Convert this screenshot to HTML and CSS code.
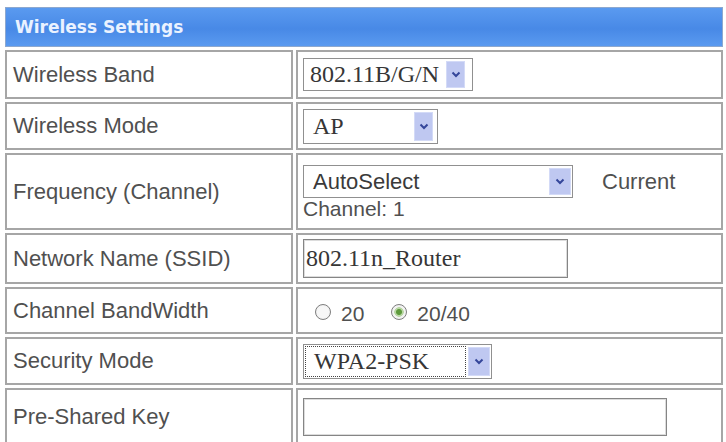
FILE: index.html
```html
<!DOCTYPE html>
<html lang="en">
<head>
<meta charset="utf-8">
<title>Wireless Settings</title>
<link rel="stylesheet" href="styles.css">
</head>
<body>
<div class="panel">
  <div class="head">Wireless Settings</div>

  <div class="label">Wireless Band</div>
  <div class="value">
    <div class="select select-band">
      <span class="select-text serif">802.11B/G/N</span>
      <span class="select-btn"><svg width="10" height="7" viewBox="0 0 10 7"><path d="M1.5 1.5 L5 5 L8.5 1.5" fill="none" stroke="#34469a" stroke-width="2"/></svg></span>
    </div>
  </div>

  <div class="label">Wireless Mode</div>
  <div class="value">
    <div class="select select-mode">
      <span class="select-text serif">AP</span>
      <span class="select-btn"><svg width="10" height="7" viewBox="0 0 10 7"><path d="M1.5 1.5 L5 5 L8.5 1.5" fill="none" stroke="#34469a" stroke-width="2"/></svg></span>
    </div>
  </div>

  <div class="label">Frequency (Channel)</div>
  <div class="value value-stack">
    <div class="freq-line">
      <div class="select select-freq">
        <span class="select-text sans">AutoSelect</span>
        <span class="select-btn"><svg width="10" height="7" viewBox="0 0 10 7"><path d="M1.5 1.5 L5 5 L8.5 1.5" fill="none" stroke="#34469a" stroke-width="2"/></svg></span>
      </div>
      <span class="current">Current</span>
    </div>
    <div class="channel">Channel: 1</div>
  </div>

  <div class="label">Network Name (SSID)</div>
  <div class="value">
    <input class="field field-ssid serif" type="text" value="802.11n_Router">
  </div>

  <div class="label">Channel BandWidth</div>
  <div class="value value-radio">
    <label class="radio"><input type="radio" name="bw"><span>20</span></label>
    <label class="radio"><input type="radio" name="bw" checked><span>20/40</span></label>
  </div>

  <div class="label">Security Mode</div>
  <div class="value">
    <div class="select select-sec">
      <span class="select-text serif focus">WPA2-PSK</span>
      <span class="select-btn"><svg width="10" height="7" viewBox="0 0 10 7"><path d="M1.5 1.5 L5 5 L8.5 1.5" fill="none" stroke="#34469a" stroke-width="2"/></svg></span>
    </div>
  </div>

  <div class="label">Pre-Shared Key</div>
  <div class="value">
    <input class="field field-psk serif" type="password" value="">
  </div>
</div>
</body>
</html>
```

FILE: styles.css
```css
html, body {
  margin: 0;
  padding: 0;
  background: #ffffff;
  overflow: hidden;
}

body {
  font-family: "Liberation Sans", Arial, sans-serif;
  color: #505050;
}

.panel {
  display: grid;
  grid-template-columns: 288px 427px;
  grid-template-rows: 40px 49px 48px 77px 51px 47px 48px 58px;
  gap: 3px;
  margin: 7px 0 0 5px;
}

.head {
  grid-column: 1 / -1;
  box-sizing: border-box;
  border: 1px solid #8da8cf;
  background: linear-gradient(#5a9af0 0%, #4889e6 55%, #5a9af0 100%);
  color: #eaf2ff;
  font-family: "DejaVu Sans", Verdana, sans-serif;
  font-weight: bold;
  font-size: 17px;
  display: flex;
  align-items: center;
  padding-left: 9px;
}

.label,
.value {
  box-sizing: border-box;
  border: 2px solid #a6a6a6;
  background: #ffffff;
  display: flex;
  align-items: center;
}

.label {
  padding-left: 6px;
  font-size: 22px;
  color: #505050;
}

.value {
  padding-left: 5px;
  font-size: 22px;
}

.serif {
  font-family: "Liberation Serif", "Times New Roman", serif;
  font-size: 24px;
  color: #363636;
}

.sans {
  font-family: "Liberation Sans", Arial, sans-serif;
  font-size: 22px;
  color: #3a3a3a;
}

/* fake select boxes */
.select {
  box-sizing: border-box;
  display: flex;
  align-items: stretch;
  border: 1px solid #909090;
  background: #ffffff;
  height: 33px;
}

.select-text {
  flex: 1;
  display: flex;
  align-items: center;
  padding-left: 6px;
  white-space: nowrap;
}

.select-text.focus {
  border: 1px dotted #444444;
  margin: 1px 2px 1px 1px;
  padding-left: 8px;
}

.select-btn {
  width: 19px;
  margin: 2px 2px 2px 0;
  background: #bfc8f1;
  box-shadow: inset 0 0 0 1px #d3daf7;
  display: flex;
  align-items: center;
  justify-content: center;
}

.select-band {
  width: 170px;
}
.select-band .select-btn {
  margin-right: 7px;
}

.select-mode {
  width: 135px;
  height: 35px;
}
.select-mode .select-text {
  padding-left: 9px;
}
.select-mode .select-btn {
  margin-right: 4px;
}

.select-freq {
  width: 270px;
}
.select-freq .select-text {
  padding-left: 9px;
}
.select-freq .select-btn {
  width: 22px;
  margin-right: 1px;
}

.select-sec {
  width: 189px;
  height: 35px;
}
.select-sec .select-btn {
  width: 22px;
  margin-right: 1px;
}

/* frequency cell */
.value-stack {
  flex-direction: column;
  align-items: flex-start;
  justify-content: center;
  padding-top: 2px;
}

.freq-line {
  display: flex;
  align-items: center;
}

.current {
  margin-left: 29px;
  color: #505050;
}

.channel {
  line-height: 22px;
  font-size: 21px;
  color: #505050;
}

/* text fields */
.field {
  box-sizing: border-box;
  border: 1px solid #858585;
  box-shadow: inset 0 0 0 1px #dcdcdc;
  padding: 0 0 0 2px;
  margin: 0;
  background: #ffffff;
  outline: none;
}

.field-ssid {
  width: 265px;
  height: 39px;
}

.field-psk {
  width: 364px;
  height: 38px;
}

/* radios */
.value-radio {
  padding-top: 6px;
  padding-left: 17px;
  gap: 27px;
}

.radio {
  display: flex;
  align-items: center;
  gap: 10px;
  color: #505050;
  font-size: 21px;
}

.radio input {
  -webkit-appearance: none;
  appearance: none;
  margin: 0 0 3px 0;
  width: 16px;
  height: 16px;
  border-radius: 50%;
  border: 1px solid #7e7e7e;
  background: radial-gradient(circle, #f7f7f7 0 55%, #e0e0e0 100%);
  box-sizing: border-box;
}

.radio input:checked {
  background: radial-gradient(circle, #5e9a3c 0 2.5px, #b9d7a4 3.5px 4.5px, #f2f2f2 5px);
}
```
